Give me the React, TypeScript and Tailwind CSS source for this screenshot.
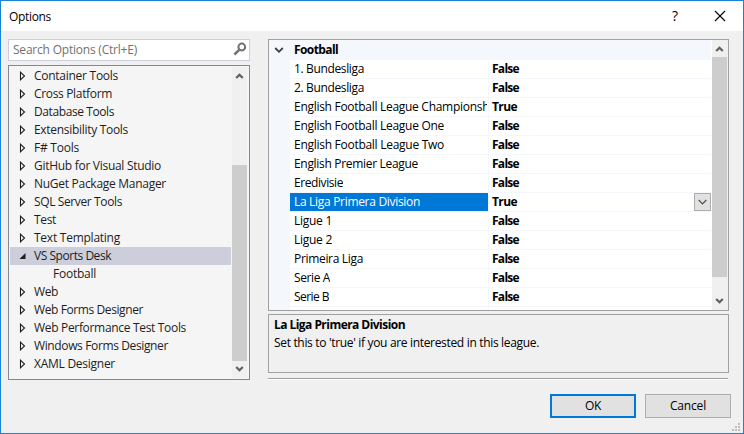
import React from "react";

const tree: [string, number, string?][] = [
  ["Container Tools", 84],
  ["Cross Platform", 78],
  ["Database Tools", 80],
  ["Extensibility Tools", 94],
  ["F# Tools", 45],
  ["GitHub for Visual Studio", 127],
  ["NuGet Package Manager", 132],
  ["SQL Server Tools", 88],
  ["Test", 22],
  ["Text Templating", 86],
  ["VS Sports Desk", 77, "open"],
  ["Football", 43, "child"],
  ["Web", 24],
  ["Web Forms Designer", 109],
  ["Web Performance Test Tools", 152],
  ["Windows Forms Designer", 134],
  ["XAML Designer", 81],
];

const leagues: [string, number, boolean][] = [
  ["1. Bundesliga", 70, false],
  ["2. Bundesliga", 70, false],
  ["English Football League Championship", 205, true],
  ["English Football League One", 150, false],
  ["English Football League Two", 150, false],
  ["English Premier League", 124, false],
  ["Eredivisie", 49, false],
  ["La Liga Primera Division", 126, true],
  ["Ligue 1", 38, false],
  ["Ligue 2", 38, false],
  ["Primeira Liga", 69, false],
  ["Serie A", 36, false],
  ["Serie B", 35, false],
];

/* Text whose letter spacing is adjusted so that it spans the given width. */
function Label({ children, w, className = "" }: { children: string; w: number; className?: string }) {
  const ref = React.useRef<HTMLSpanElement>(null);
  const [gap, setGap] = React.useState(0);
  React.useLayoutEffect(() => {
    const fit = () => {
      const el = ref.current;
      if (!el) return;
      el.style.letterSpacing = "0px";
      const next = (w - el.getBoundingClientRect().width) / children.length;
      el.style.letterSpacing = `${next}px`;
      setGap(next);
    };
    fit();
    document.fonts.ready.then(fit);
  }, [children, w]);
  return (
    <span ref={ref} className={`inline-block whitespace-nowrap ${className}`} style={{ letterSpacing: gap }}>
      {children}
    </span>
  );
}

function Chevron({ up = false }: { up?: boolean }) {
  return (
    <svg width="15" height="17" viewBox="0 0 15 17" fill="none" stroke="#606060" strokeWidth="2.2" className={up ? "shrink-0" : "shrink-0 rotate-180"}>
      <path d="M4.2 11 7.5 7.7l3.3 3.3" />
    </svg>
  );
}

export default function App() {
  return (
    <div className="flex h-[434px] w-[744px] flex-col border border-[#1883d7] bg-[#f0f0f0] font-['Open_Sans','Noto_Sans',sans-serif] text-[12px] text-black">
      <header className="flex h-[30px] shrink-0 items-center bg-white pl-2">
        <Label w={42} className="pt-px">Options</Label>
        <span className="ml-auto mr-[36px] text-[14px] font-medium leading-none">?</span>
        <svg width="12" height="12" viewBox="0 0 12 12" stroke="#000" strokeWidth="1.1" className="mr-[17px]">
          <path d="m1 1 10 10M11 1 1 11" />
        </svg>
      </header>

      <main className="flex h-[341px] shrink-0 items-start gap-[18px] pl-[7px] pt-2">
        <aside className="flex w-[242px] shrink-0 flex-col gap-1">
          <div className="flex h-[22px] shrink-0 items-center border border-[#cccedb] bg-white pl-1 pr-[2px] text-[#717171]">
            <Label w={124}>Search Options (Ctrl+E)</Label>
            <svg width="14" height="14" viewBox="0 0 14 14" fill="none" stroke="#717171" strokeWidth="2" className="mb-[2px] ml-auto">
              <circle cx="8.8" cy="5" r="3.4" />
              <path d="M6.2 7.8 1.4 12.5" strokeWidth="2.5" />
            </svg>
          </div>
          <div className="flex h-[315px] shrink-0 border border-[#828790] bg-[#f5f5f5] p-px text-[#1e1e1e]">
            <ul className="w-[221px]">
              {tree.map(([name, w, kind]) => (
                <li key={name} className={`flex h-[18px] items-center ${kind === "open" ? "bg-[#cccedb]" : ""} ${kind === "child" ? "pl-[43px]" : "pl-[9px]"}`}>
                  {kind !== "child" && (
                    <svg width="8" height="10" viewBox="0 0 8 10" className="mr-[7px]">
                      {kind === "open" ? (
                        <path d="M6.5 2v6h-6z" fill="#1e1e1e" />
                      ) : (
                        <path d="M1.5 1.2v7.6L5.5 5z" fill="none" stroke="#1e1e1e" strokeWidth="1.1" />
                      )}
                    </svg>
                  )}
                  <Label w={w}>{name}</Label>
                </li>
              ))}
            </ul>
            <div className="ml-px flex w-[15px] flex-col bg-[#f0f0f0]">
              <Chevron up />
              <div className="mt-auto h-[196px] bg-[#cdcdcd]" />
              <Chevron />
            </div>
          </div>
        </aside>

        <section className="flex w-[461px] flex-col">
          <div className="flex h-[272px] shrink-0 border border-[#a0a0a0] bg-white">
            <div className="h-full w-[442px] overflow-hidden">
              <div className="flex h-5 items-center bg-[#f4f7fc] pl-[5px] font-bold">
                <svg width="10" height="10" viewBox="0 0 10 10" fill="none" stroke="#404040" strokeWidth="1.8" className="mr-[10px]">
                  <path d="m1.2 3 3.8 3.8L8.8 3" />
                </svg>
                <Label w={44}>Football</Label>
              </div>
              <div className="flex">
                <div className="h-[250px] w-[21px] bg-[#f4f7fc]" />
                <div className="flex-1">
                  {leagues.map(([name, w, on], i) => (
                    <div key={name} className="flex h-[19px]">
                      <div className={`flex w-[198px] items-center overflow-hidden border-b border-[#f4f7fc] pl-1 pr-px ${i === 7 ? "bg-[#0078d7] text-white" : ""}`}>
                        <div className="overflow-hidden">
                          <Label w={w} className="align-top">{name}</Label>
                        </div>
                      </div>
                      <div className="flex flex-1 items-center justify-between border-b border-l border-[#f4f7fc] pl-[3px] font-bold">
                        <Label w={on ? 25 : 27}>{on ? "True" : "False"}</Label>
                        {i === 7 && (
                          <span className="flex h-[18px] w-[17px] items-center justify-center border border-[#adadad] bg-[#e1e1e1]">
                            <svg width="9" height="6" viewBox="0 0 9 6" fill="none" stroke="#505050" strokeWidth="1.2">
                              <path d="m.7 1 3.8 3.8L8.3 1" />
                            </svg>
                          </span>
                        )}
                      </div>
                    </div>
                  ))}
                  <div className="ml-[198px] h-[3px] border-l border-[#f4f7fc]" />
                </div>
              </div>
            </div>
            <div className="ml-px flex w-4 flex-col bg-[#f0f0f0]">
              <Chevron up />
              <div className="h-[220px] w-[15px] bg-[#cdcdcd]" />
              <div className="mt-auto">
                <Chevron />
              </div>
            </div>
          </div>
          <div className="mt-[3px] flex h-[59px] shrink-0 flex-col border border-[#a0a0a0] pl-[5px] pt-px leading-[18px]">
            <Label w={131} className="self-start font-bold">La Liga Primera Division</Label>
            <Label w={265} className="self-start">Set this to 'true' if you are interested in this league.</Label>
          </div>
        </section>
      </main>

      <div className="ml-[267px] mt-[6px] h-[2px] w-[460px] shrink-0 border-b border-t border-b-white border-t-[#a0a0a0]" />

      <footer className="mt-[14px] flex justify-end gap-[9px] pr-3">
        <button className="h-6 w-[86px] border-2 border-[#0078d7] bg-[#e1e1e1]">
          <Label w={16}>OK</Label>
        </button>
        <button className="h-6 w-[86px] border border-[#adadad] bg-[#e1e1e1]">
          <Label w={36}>Cancel</Label>
        </button>
      </footer>
      <svg width="8" height="8" viewBox="0 0 8 8" fill="#bfbfbf" className="ml-auto mr-[3px] mt-[5px]">
        <path d="M6 0h2v2H6zM3 3h2v2H3zM6 3h2v2H6zM0 6h2v2H0zM3 6h2v2H3zM6 6h2v2H6z" />
      </svg>
    </div>
  );
}
